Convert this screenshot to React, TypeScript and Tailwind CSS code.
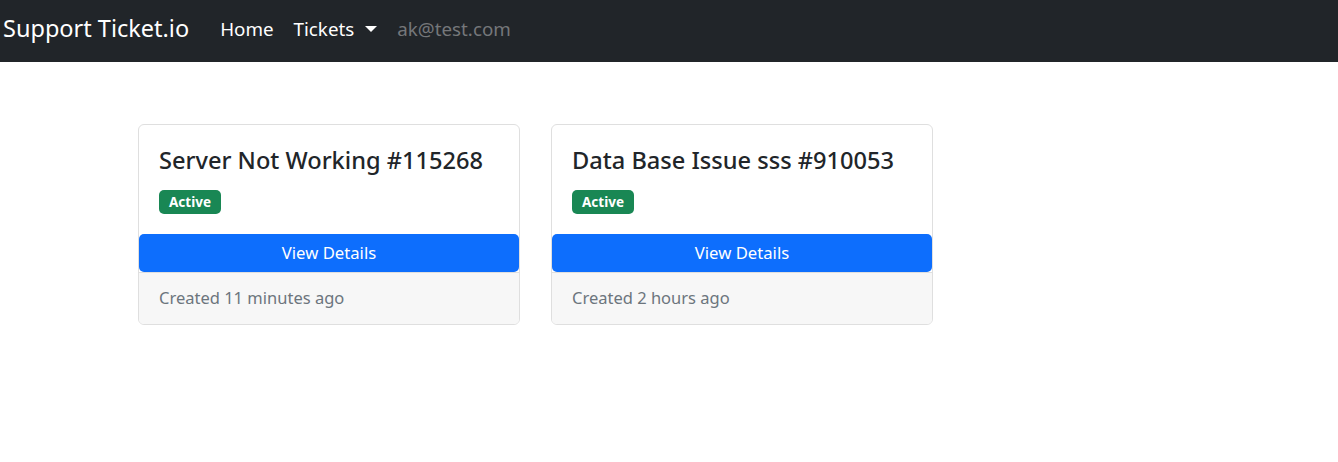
const font = { fontFamily: '"Noto Sans", "Open Sans", sans-serif' };

function TicketCard({ title, created }: { title: string; created: string }) {
  return (
    <div className="flex w-[382px] flex-col overflow-hidden rounded-[6px] border border-[#dfdfdf] bg-white">
      <div className="px-5 pb-5 pt-[21px]">
        <h4 className="text-[23.6px] leading-[28px] font-medium text-[#212529]">{title}</h4>
        <span className="mt-[16px] inline-block rounded-[5px] bg-[#198754] px-[10px] py-[3px] text-[13.5px] leading-[18px] font-bold text-white">
          Active
        </span>
      </div>
      <button className="h-[38px] w-full rounded-[5px] bg-[#0d6efd] text-[16.7px] text-white">View Details</button>
      <div className="border-t border-[#dfdfdf] bg-[#f7f7f7] px-5 pb-[14px] pt-[13px] text-[16.5px] leading-[24px] text-[#6c757d]">
        {created}
      </div>
    </div>
  );
}

export default function App() {
  return (
    <div style={font} className="min-h-[462px] bg-white">
      <nav className="flex h-[62px] items-center bg-[#212529] pb-[4px] pl-[3px]">
        <span className="text-[23.5px] text-white">Support Ticket.io</span>
        <div className="ml-[31px] flex items-center gap-5 text-[18.8px]">
          <span className="text-white">Home</span>
          <span className="flex items-center text-white">
            Tickets
            <span className="ml-[11px] h-0 w-0 border-x-[6px] border-t-[6px] border-x-transparent border-t-white" />
          </span>
          <span className="text-[#75777a]">ak@test.com</span>
        </div>
      </nav>
      <div className="flex gap-[31px] pl-[138px] pt-[62px]">
        <TicketCard title="Server Not Working #115268" created="Created 11 minutes ago" />
        <TicketCard title="Data Base Issue sss #910053" created="Created 2 hours ago" />
      </div>
    </div>
  );
}
